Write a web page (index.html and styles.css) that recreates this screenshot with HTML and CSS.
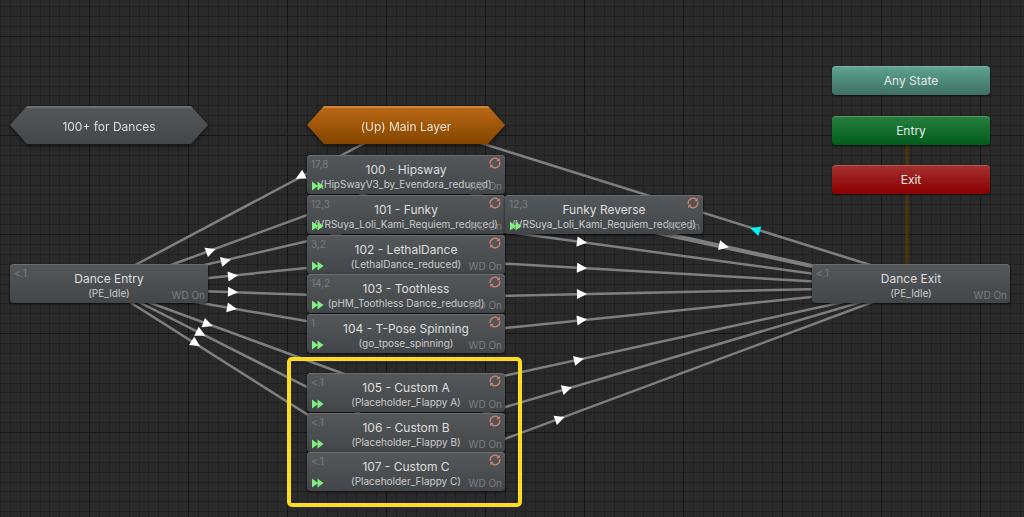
FILE: index.html
```
<!DOCTYPE html>
<html lang="en">
<head>
<meta charset="utf-8">
<title>Animator</title>
<link rel="stylesheet" href="styles.css">
</head>
<body>
<svg class="defs" width="0" height="0" aria-hidden="true">
  <symbol id="loop" viewBox="0 0 12 12"><g fill="none" stroke="#d08370" stroke-width="1.4"><path d="M1.300 6.800A4.700 4.700 0 0 1 9 2.400M10.700 5.200A4.700 4.700 0 0 1 3 9.600"/></g><path fill="#d08370" d="M7.400 4.200h3.400V.8zM4.600 7.800H1.200v3.400z"/></symbol>
  <symbol id="play" viewBox="0 0 12 10"><path fill="#80f080" d="M0 .5L6 5 0 9.500zM5.500 .5L11.500 5l-6 4.500z"/></symbol>
</svg>
<main class="graph">
  <svg class="edges" aria-hidden="true">
    <defs>
      <pattern id="grid" x="89" y="36" width="99" height="99" patternUnits="userSpaceOnUse">
        <path class="minor" d="M10 0h1v99h-1zM20 0h1v99h-1zM30 0h1v99h-1zM40 0h1v99h-1zM50 0h1v99h-1zM59 0h1v99h-1zM69 0h1v99h-1zM79 0h1v99h-1zM89 0h1v99h-1z"/>
        <path class="minor" d="M0 10h99v1H0zM0 20h99v1H0zM0 30h99v1H0zM0 40h99v1H0zM0 50h99v1H0zM0 59h99v1H0zM0 69h99v1H0zM0 79h99v1H0zM0 89h99v1H0z"/>
        <path class="major" d="M0 0h1v99H0zM1 0h98v1H1z"/>
      </pattern>
      <path id="tip" d="M6 0L-4 -5V5z"/>
    </defs>
    <rect width="100%" height="100%" fill="url(#grid)"/>
    <path class="default" d="M907 131V283"/>
    <g class="lines">
      <path d="M404 122L107 280"/>
      <path d="M111 287L408 178"/>
      <path d="M110 287L407 218"/>
      <path d="M109 288L406 258"/>
      <path d="M109 288L406 298"/>
      <path d="M108 287L405 338"/>
      <path d="M107 287L404 396"/>
      <path d="M107 286L404 436"/>
      <path d="M106 287L403 475"/>
      <path d="M405 179L910 288"/>
      <path d="M603 219L910 287"/>
      <path d="M405 218L910 287"/>
      <path d="M406 258L911 287"/>
      <path d="M406 298L911 287"/>
      <path d="M406 338L911 287"/>
      <path d="M407 397L912 287"/>
      <path d="M407 436L912 287"/>
      <path d="M408 475L913 287"/>
      <path d="M912 278L407 120"/>
    </g>
    <g class="tips">
      <use href="#tip" transform="translate(301 176) rotate(152)"/>
      <use href="#tip" transform="translate(210 251) rotate(-20)"/>
      <use href="#tip" transform="translate(225 261) rotate(-13)"/>
      <use href="#tip" transform="translate(232 276) rotate(-6)"/>
      <use href="#tip" transform="translate(232 292) rotate(2)"/>
      <use href="#tip" transform="translate(231 308) rotate(10)"/>
      <use href="#tip" transform="translate(207 324) rotate(20)"/>
      <use href="#tip" transform="translate(200 333) rotate(27)"/>
      <use href="#tip" transform="translate(195 343) rotate(32)"/>
      <use href="#tip" transform="translate(723 246) rotate(12)"/>
      <use href="#tip" transform="translate(581 242) rotate(8)"/>
      <use href="#tip" transform="translate(581 268) rotate(3)"/>
      <use href="#tip" transform="translate(581 294) rotate(-1)"/>
      <use href="#tip" transform="translate(581 320) rotate(-6)"/>
      <use href="#tip" transform="translate(578 360) rotate(-12)"/>
      <use href="#tip" transform="translate(566 389) rotate(-16)"/>
      <use href="#tip" transform="translate(559 419) rotate(-20)"/>
      <use class="active" href="#tip" transform="translate(756 230) rotate(197)"/>
    </g>
  </svg>

  <div class="machine pos-dances"><span>100+ for Dances</span></div>
  <div class="machine up pos-up"><span>(Up) Main Layer</span></div>

  <div class="pill any pos-any">Any State</div>
  <div class="pill enter pos-start">Entry</div>
  <div class="pill exit pos-end">Exit</div>

  <section class="node pos-entry"><h2>Dance Entry</h2><p>(PE_Idle)</p><span class="time">&lt;.1</span><span class="wd">WD On</span></section>
  <section class="node pos-exit"><h2>Dance Exit</h2><p>(PE_Idle)</p><span class="time">&lt;.1</span><span class="wd">WD On</span></section>

  <section class="node pos-100"><h2>100 - Hipsway</h2><p>(HipSwayV3_by_Evendora_reduced)</p><span class="time">17,8</span><span class="wd">WD On</span><svg class="loop"><use href="#loop"/></svg><svg class="play"><use href="#play"/></svg></section>
  <section class="node pos-101"><h2>101 - Funky</h2><p>(VRSuya_Loli_Kami_Requiem_reduced)</p><span class="time">12,3</span><span class="wd">WD On</span><svg class="loop"><use href="#loop"/></svg><svg class="play"><use href="#play"/></svg></section>
  <section class="node pos-reverse"><h2>Funky Reverse</h2><p>(VRSuya_Loli_Kami_Requiem_reduced)</p><span class="time">12,3</span><span class="wd">WD On</span><svg class="loop"><use href="#loop"/></svg><svg class="play"><use href="#play"/></svg></section>
  <section class="node pos-102"><h2>102 - LethalDance</h2><p>(LethalDance_reduced)</p><span class="time">3,2</span><span class="wd">WD On</span><svg class="loop"><use href="#loop"/></svg><svg class="play"><use href="#play"/></svg></section>
  <section class="node pos-103"><h2>103 - Toothless</h2><p>(pHM_Toothless Dance_reduced)</p><span class="time">14,2</span><span class="wd">WD On</span><svg class="loop"><use href="#loop"/></svg><svg class="play"><use href="#play"/></svg></section>
  <section class="node pos-104"><h2>104 - T-Pose Spinning</h2><p>(go_tpose_spinning)</p><span class="time">1</span><span class="wd">WD On</span><svg class="loop"><use href="#loop"/></svg><svg class="play"><use href="#play"/></svg></section>
  <section class="node pos-105"><h2>105 - Custom A</h2><p>(Placeholder_Flappy A)</p><span class="time">&lt;.1</span><span class="wd">WD On</span><svg class="loop"><use href="#loop"/></svg><svg class="play"><use href="#play"/></svg></section>
  <section class="node pos-106"><h2>106 - Custom B</h2><p>(Placeholder_Flappy B)</p><span class="time">&lt;.1</span><span class="wd">WD On</span><svg class="loop"><use href="#loop"/></svg><svg class="play"><use href="#play"/></svg></section>
  <section class="node pos-107"><h2>107 - Custom C</h2><p>(Placeholder_Flappy C)</p><span class="time">&lt;.1</span><span class="wd">WD On</span><svg class="loop"><use href="#loop"/></svg><svg class="play"><use href="#play"/></svg></section>

  <div class="highlight"></div>
</main>
</body>
</html>
```
FILE: styles.css
```
* { box-sizing: border-box; }
body {
  margin: 0;
  background: #2a2a2a;
  font-family: Inter, "Liberation Sans", sans-serif;
}
.defs { position: absolute; }

/* Canvas */
.graph { position: relative; min-height: 100vh; overflow: hidden; }
.edges { position: absolute; inset: 0; width: 100%; height: 100%; }
.minor { fill: #000; fill-opacity: .18; }
.major { fill: #000; fill-opacity: .42; }
.lines { fill: none; stroke: #7f7f7f; stroke-width: 2.5; }
.default { stroke: #4d3608; stroke-width: 3; }
.tips { fill: #fff; }
.tips .active { fill: #00f5f5; }

/* Sub-state machines */
.machine {
  position: absolute;
  width: 198px;
  height: 38px;
  filter: drop-shadow(0 2px 2px rgba(0, 0, 0, .5));
}
.machine span {
  display: grid;
  place-items: center;
  height: 100%;
  padding-top: 2px;
  clip-path: polygon(17px 0, calc(100% - 17px) 0, 100% 50%, calc(100% - 17px) 100%, 17px 100%, 0 50%);
  background: linear-gradient(#6d6f71 2px, #54575a 2px, #44474a);
  color: #dedede;
  font-size: 12px;
}
.machine.up span {
  background: linear-gradient(#cf8440 2px, #b96714 2px, #834500);
  color: #f2e3d0;
}

/* Built-in states */
.pill {
  position: absolute;
  display: grid;
  place-items: center;
  width: 158px;
  height: 29px;
  border-radius: 4px;
  box-shadow: 0 1px 2px rgba(0, 0, 0, .6), inset 0 1px rgba(255, 255, 255, .2);
  color: #e0e8e3;
  font-size: 12px;
}
.any { background: linear-gradient(#5fa38f, #3d7064); }
.enter { background: linear-gradient(#288040, #005c1c); }
.exit { background: linear-gradient(#a53030, #8c0000); }

/* States */
.node {
  position: absolute;
  width: 198px;
  height: 39px;
  padding-top: 7px;
  border-radius: 4px;
  background: linear-gradient(#55585b, #434649);
  box-shadow: 0 1px 3px rgba(0, 0, 0, .7), inset 0 1px #6b6d6f;
  color: #dedede;
  text-align: center;
  white-space: nowrap;
}
.node h2 { margin: 0; font-size: 12px; font-weight: 400; line-height: 16px; }
.node p { margin: 0; color: #cbcbcb; font-size: 10px; line-height: 13px; }
.time, .wd { position: absolute; color: #7a7c7e; font-size: 10px; line-height: 12px; }
.time { left: 4px; top: 3px; }
.wd { right: 3px; bottom: 2px; }
.loop { position: absolute; right: 4px; top: 2px; width: 12px; height: 12px; }
.play { position: absolute; left: 5px; bottom: 3px; width: 12px; height: 10px; }

/* Placement on the canvas */
.pos-dances { left: 10px; top: 106px; }
.pos-up { left: 307px; top: 106px; }
.pos-any { left: 832px; top: 66px; }
.pos-start { left: 832px; top: 116px; }
.pos-end { left: 832px; top: 165px; }
.pos-entry { left: 10px; top: 264px; }
.pos-exit { left: 812px; top: 264px; }
.pos-100 { left: 307px; top: 155px; }
.pos-101 { left: 307px; top: 195px; }
.pos-reverse { left: 505px; top: 195px; }
.pos-102 { left: 307px; top: 235px; }
.pos-103 { left: 307px; top: 274px; }
.pos-104 { left: 307px; top: 314px; }
.pos-105 { left: 307px; top: 373px; }
.pos-106 { left: 307px; top: 413px; }
.pos-107 { left: 307px; top: 452px; }

.highlight {
  position: absolute;
  left: 287px;
  top: 357px;
  width: 235px;
  height: 150px;
  border: 4px solid #fbdc1f;
  border-radius: 5px;
}
```
